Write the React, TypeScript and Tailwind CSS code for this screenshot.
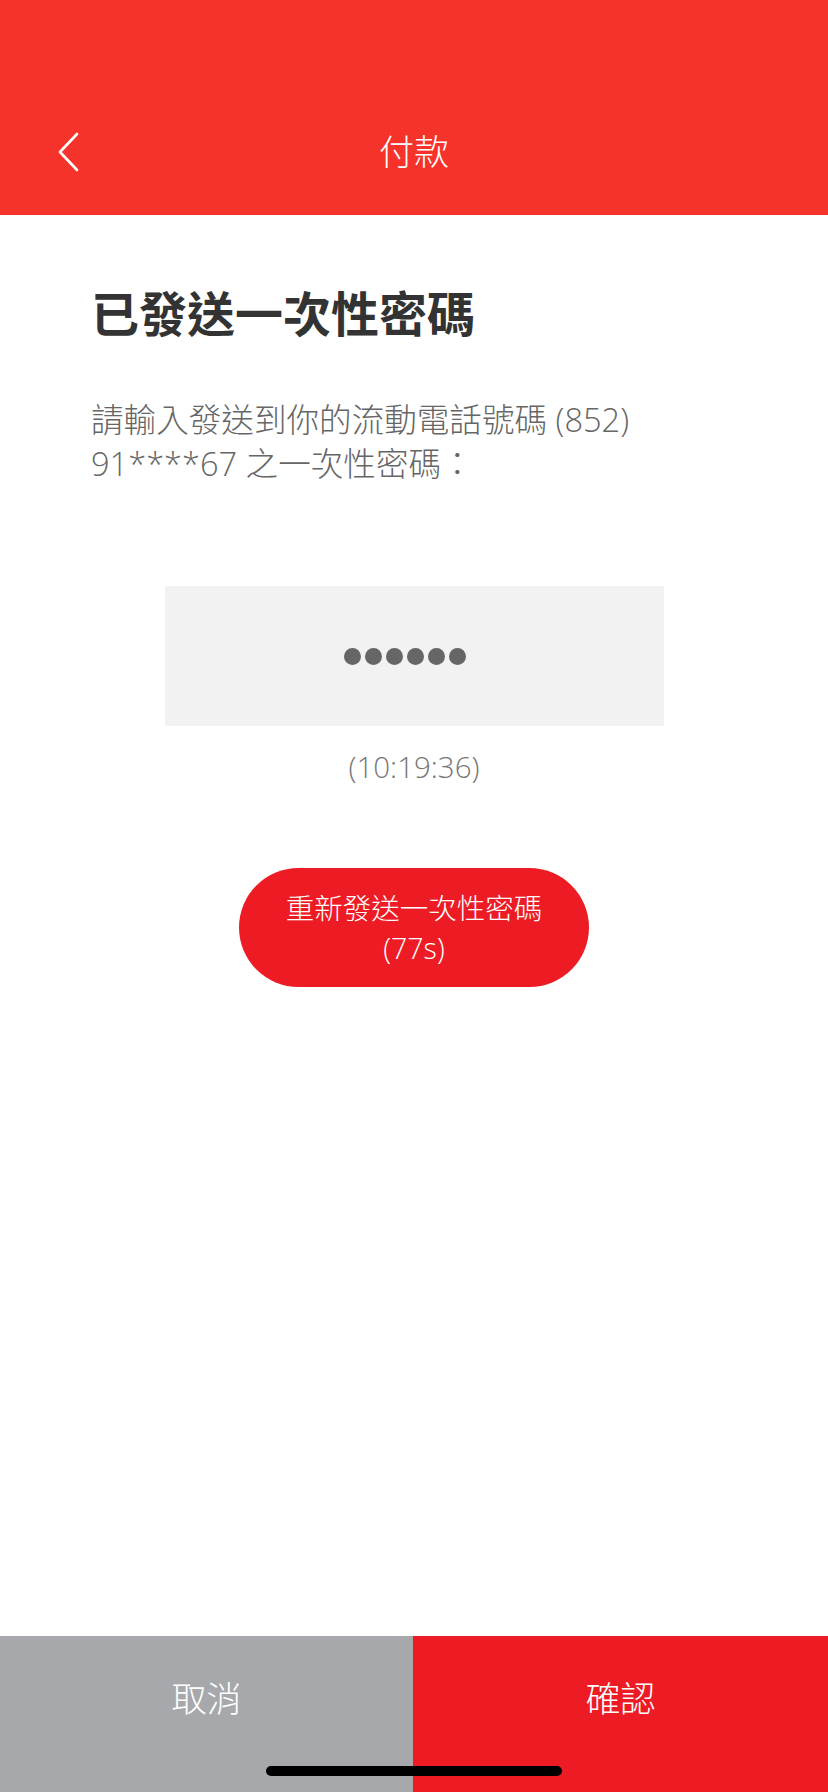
import React from "react";

const font = { fontFamily: '"Open Sans", "Noto Sans CJK TC", sans-serif' };

export default function App() {
  return (
    <div className="flex h-[1792px] w-[828px] flex-col bg-white" style={font}>
      <div className="h-[215px] bg-[#f5332a] pt-[108px]">
        <div className="relative flex h-[88px] items-center justify-center">
          <svg className="absolute left-[55px] top-[23px]" width="26" height="42" viewBox="0 0 26 42" fill="none">
            <path d="M22 3 L5 21 L22 39" stroke="white" strokeWidth="2.6" strokeLinecap="round" strokeLinejoin="round" />
          </svg>
          <span className="text-[35px] font-light leading-[44px] text-white">付款</span>
        </div>
      </div>

      <div className="px-[91px]">
        <h1 className="mt-[71px] text-[48px] font-bold leading-[56px] text-[#333333]">已發送一次性密碼</h1>
        <p className="mt-[56px] text-[32.6px] font-light leading-[44px] text-[#666666]">
          請輸入發送到你的流動電話號碼 (852)
          <br />
          91****67 之一次性密碼：
        </p>
      </div>

      <div className="mx-auto mt-[100px] flex h-[140px] w-[499px] items-center justify-center bg-[#f2f2f2]">
        <div className="flex gap-[4px] pr-[18px]">
          {[0, 1, 2, 3, 4, 5].map((i) => (
            <span key={i} className="block h-[17px] w-[17px] rounded-full bg-[#666666]" />
          ))}
        </div>
      </div>

      <div className="mt-[21px] text-center text-[29.5px] font-light leading-[40px] text-[#777777]">(10:19:36)</div>

      <div className="mx-auto mt-[81px] flex h-[119px] w-[350px] flex-col items-center justify-center rounded-full bg-[#ed1c24] text-[28.5px] font-light leading-[40px] text-white">
        <span>重新發送一次性密碼</span>
        <span>(77s)</span>
      </div>

      <div className="relative mt-auto flex h-[156px]">
        <div className="flex w-[413px] items-start justify-center bg-[#a7a8ab] pt-[40px] text-[35px] font-light leading-[46px] text-white">取消</div>
        <div className="flex flex-1 items-start justify-center bg-[#ed1c24] pt-[40px] text-[35px] font-light leading-[46px] text-white">確認</div>
        <div className="absolute left-[266px] top-[130px] h-[10px] w-[296px] rounded-full bg-black" />
      </div>
    </div>
  );
}
